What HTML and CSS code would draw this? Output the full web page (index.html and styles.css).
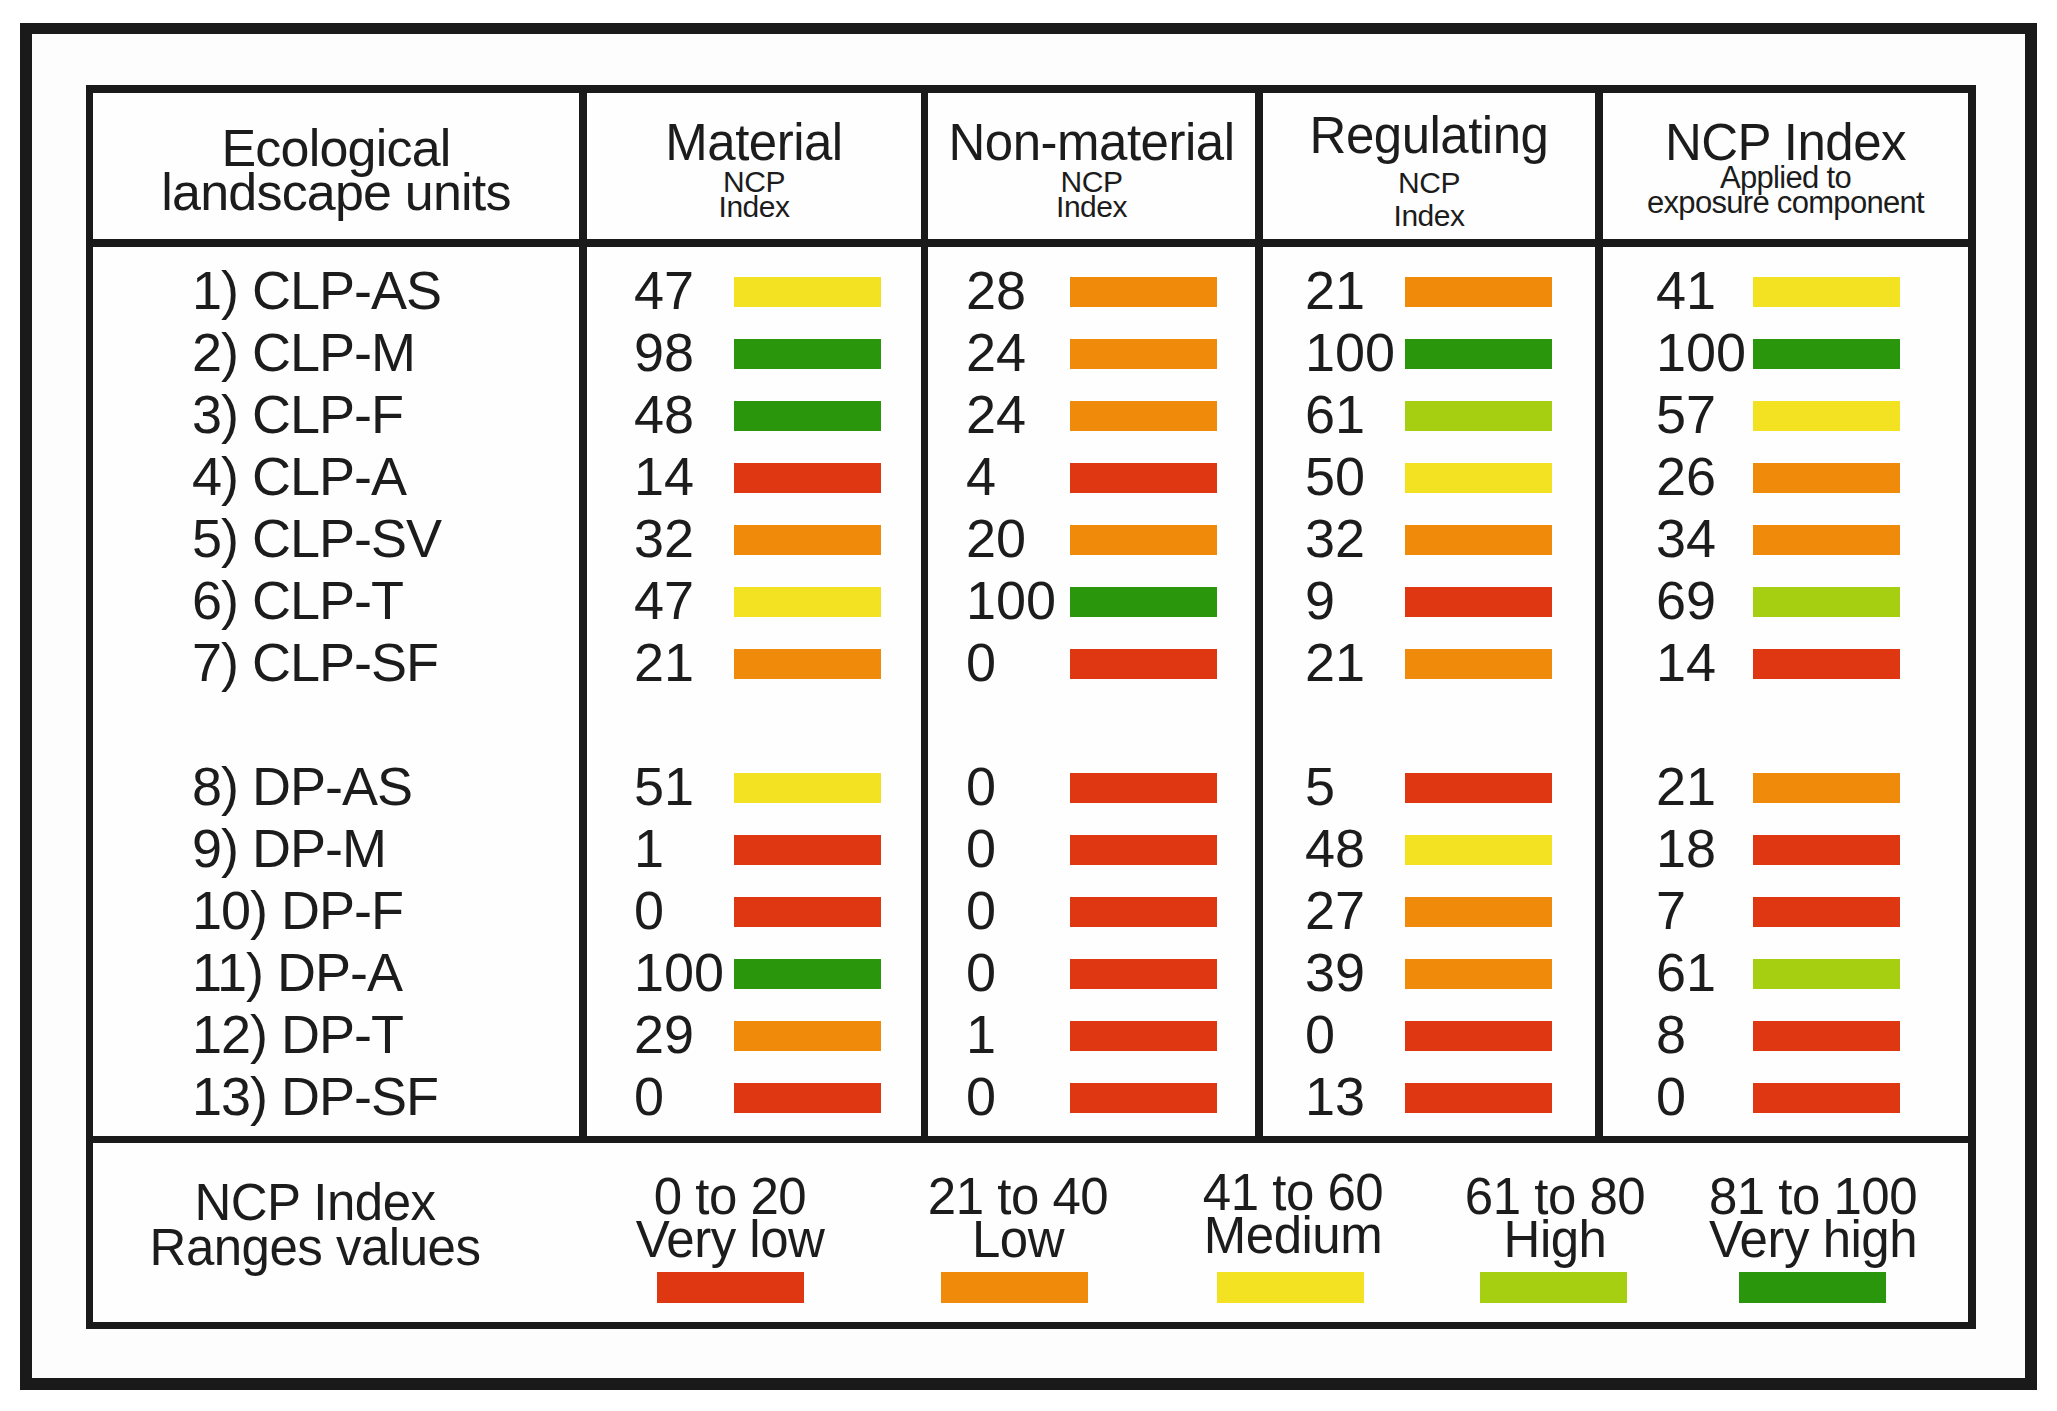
FILE: index.html
```html
<!DOCTYPE html>
<html lang="en">
<head>
<meta charset="utf-8">
<title>NCP Index table</title>
<link rel="stylesheet" href="styles.css">
</head>
<body>
<div class="frame">
  <div class="table">
    <div class="head">
      <div class="hc hc1">
        <div class="h-main">Ecological</div>
        <div class="h-main">landscape units</div>
      </div>
      <div class="hc hc2">
        <div class="h-main">Material</div>
        <div class="h-sub s1">NCP</div>
        <div class="h-sub">Index</div>
      </div>
      <div class="hc hc3">
        <div class="h-main">Non-material</div>
        <div class="h-sub s1">NCP</div>
        <div class="h-sub">Index</div>
      </div>
      <div class="hc hc4">
        <div class="h-main">Regulating</div>
        <div class="h-sub s1">NCP</div>
        <div class="h-sub s2">Index</div>
      </div>
      <div class="hc hc5">
        <div class="h-main">NCP Index</div>
        <div class="h-sub s1">Applied to</div>
        <div class="h-sub">exposure component</div>
      </div>
    </div>

    <div class="body">
      <div class="col labels">
        <div class="row">1) CLP-AS</div>
        <div class="row">2) CLP-M</div>
        <div class="row">3) CLP-F</div>
        <div class="row">4) CLP-A</div>
        <div class="row">5) CLP-SV</div>
        <div class="row">6) CLP-T</div>
        <div class="row">7) CLP-SF</div>
        <div class="gap"></div>
        <div class="row">8) DP-AS</div>
        <div class="row">9) DP-M</div>
        <div class="row">10) DP-F</div>
        <div class="row">11) DP-A</div>
        <div class="row">12) DP-T</div>
        <div class="row">13) DP-SF</div>
      </div>

      <div class="col c2">
        <div class="row"><span class="v">47</span><span class="bar yl"></span></div>
        <div class="row"><span class="v">98</span><span class="bar gr"></span></div>
        <div class="row"><span class="v">48</span><span class="bar gr"></span></div>
        <div class="row"><span class="v">14</span><span class="bar rd"></span></div>
        <div class="row"><span class="v">32</span><span class="bar or"></span></div>
        <div class="row"><span class="v">47</span><span class="bar yl"></span></div>
        <div class="row"><span class="v">21</span><span class="bar or"></span></div>
        <div class="gap"></div>
        <div class="row"><span class="v">51</span><span class="bar yl"></span></div>
        <div class="row"><span class="v">1</span><span class="bar rd"></span></div>
        <div class="row"><span class="v">0</span><span class="bar rd"></span></div>
        <div class="row"><span class="v">100</span><span class="bar gr"></span></div>
        <div class="row"><span class="v">29</span><span class="bar or"></span></div>
        <div class="row"><span class="v">0</span><span class="bar rd"></span></div>
      </div>

      <div class="col c3">
        <div class="row"><span class="v">28</span><span class="bar or"></span></div>
        <div class="row"><span class="v">24</span><span class="bar or"></span></div>
        <div class="row"><span class="v">24</span><span class="bar or"></span></div>
        <div class="row"><span class="v">4</span><span class="bar rd"></span></div>
        <div class="row"><span class="v">20</span><span class="bar or"></span></div>
        <div class="row"><span class="v">100</span><span class="bar gr"></span></div>
        <div class="row"><span class="v">0</span><span class="bar rd"></span></div>
        <div class="gap"></div>
        <div class="row"><span class="v">0</span><span class="bar rd"></span></div>
        <div class="row"><span class="v">0</span><span class="bar rd"></span></div>
        <div class="row"><span class="v">0</span><span class="bar rd"></span></div>
        <div class="row"><span class="v">0</span><span class="bar rd"></span></div>
        <div class="row"><span class="v">1</span><span class="bar rd"></span></div>
        <div class="row"><span class="v">0</span><span class="bar rd"></span></div>
      </div>

      <div class="col c4">
        <div class="row"><span class="v">21</span><span class="bar or"></span></div>
        <div class="row"><span class="v">100</span><span class="bar gr"></span></div>
        <div class="row"><span class="v">61</span><span class="bar lg"></span></div>
        <div class="row"><span class="v">50</span><span class="bar yl"></span></div>
        <div class="row"><span class="v">32</span><span class="bar or"></span></div>
        <div class="row"><span class="v">9</span><span class="bar rd"></span></div>
        <div class="row"><span class="v">21</span><span class="bar or"></span></div>
        <div class="gap"></div>
        <div class="row"><span class="v">5</span><span class="bar rd"></span></div>
        <div class="row"><span class="v">48</span><span class="bar yl"></span></div>
        <div class="row"><span class="v">27</span><span class="bar or"></span></div>
        <div class="row"><span class="v">39</span><span class="bar or"></span></div>
        <div class="row"><span class="v">0</span><span class="bar rd"></span></div>
        <div class="row"><span class="v">13</span><span class="bar rd"></span></div>
      </div>

      <div class="col c5">
        <div class="row"><span class="v">41</span><span class="bar yl"></span></div>
        <div class="row"><span class="v">100</span><span class="bar gr"></span></div>
        <div class="row"><span class="v">57</span><span class="bar yl"></span></div>
        <div class="row"><span class="v">26</span><span class="bar or"></span></div>
        <div class="row"><span class="v">34</span><span class="bar or"></span></div>
        <div class="row"><span class="v">69</span><span class="bar lg"></span></div>
        <div class="row"><span class="v">14</span><span class="bar rd"></span></div>
        <div class="gap"></div>
        <div class="row"><span class="v">21</span><span class="bar or"></span></div>
        <div class="row"><span class="v">18</span><span class="bar rd"></span></div>
        <div class="row"><span class="v">7</span><span class="bar rd"></span></div>
        <div class="row"><span class="v">61</span><span class="bar lg"></span></div>
        <div class="row"><span class="v">8</span><span class="bar rd"></span></div>
        <div class="row"><span class="v">0</span><span class="bar rd"></span></div>
      </div>
    </div>

    <div class="legend">
      <div class="lg-label">
        <div>NCP Index</div>
        <div>Ranges values</div>
      </div>
      <div class="lg-item">
        <div class="lg-line">0 to 20</div>
        <div class="lg-line">Very low</div>
        <span class="lg-bar rd"></span>
      </div>
      <div class="lg-item">
        <div class="lg-line">21 to 40</div>
        <div class="lg-line">Low</div>
        <span class="lg-bar or nudge8"></span>
      </div>
      <div class="lg-item lg-up">
        <div class="lg-line">41 to 60</div>
        <div class="lg-line">Medium</div>
        <span class="lg-bar yl nudge5"></span>
      </div>
      <div class="lg-item">
        <div class="lg-line">61 to 80</div>
        <div class="lg-line">High</div>
        <span class="lg-bar lg nudge4"></span>
      </div>
      <div class="lg-item">
        <div class="lg-line">81 to 100</div>
        <div class="lg-line">Very high</div>
        <span class="lg-bar gr nudge2"></span>
      </div>
    </div>
  </div>
</div>
</body>
</html>
```

FILE: styles.css
```css
* {
  box-sizing: border-box;
  margin: 0;
  padding: 0;
}

body {
  margin: 0;
  background: #ffffff;
  font-family: "Liberation Sans", Arial, sans-serif;
  color: #1c1c1c;
}

.frame {
  margin: 23px 0 0 20px;
  width: 2017px;
  height: 1367px;
  border: 12px solid #1a1a1a;
  border-top-width: 11px;
  padding: 51px 0 0 54px;
  background: #fdfdfd;
}

.table {
  width: 1890px;
  height: 1244px;
  border-style: solid;
  border-color: #1a1a1a;
  border-width: 8px 8px 7px 7px;
  display: flex;
  flex-direction: column;
  background: #fefefe;
}

/* ---------- header ---------- */
.head {
  height: 154px;
  flex: none;
  border-bottom: 8px solid #1a1a1a;
  display: grid;
  grid-template-columns: 486px 342px 334px 340px 373px;
}

.hc {
  display: flex;
  flex-direction: column;
  align-items: center;
  white-space: nowrap;
}

.hc2, .hc4, .hc5 { border-left: 8px solid #1a1a1a; }
.hc3 { border-left: 7px solid #1a1a1a; }

.h-main {
  font-size: 51px;
  line-height: 44px;
  letter-spacing: -0.5px;
}

.hc1 { padding-top: 33px; }
.hc1 .h-main { font-size: 52px; letter-spacing: -0.8px; }

.h-sub {
  font-size: 30px;
  line-height: 25px;
  letter-spacing: -0.5px;
}

.hc2, .hc3 { padding-top: 28px; }
.hc2 .s1, .hc3 .s1 { margin-top: 4px; }

.hc4 { padding-top: 21px; }
.hc4 .s1 { margin-top: 12px; }
.hc4 .s2 { margin-top: 8px; }

.hc5 { padding-top: 28px; }
.hc5 .h-sub { font-size: 31px; letter-spacing: -0.7px; }

/* ---------- body ---------- */
.body {
  height: 896px;
  flex: none;
  border-bottom: 7px solid #1a1a1a;
  display: grid;
  grid-template-columns: 486px 342px 334px 340px 373px;
}

.col {
  display: flex;
  flex-direction: column;
  padding-top: 12px;
}

.c2, .c4, .c5 { border-left: 8px solid #1a1a1a; }
.c3 { border-left: 7px solid #1a1a1a; }

.row {
  height: 62px;
  display: flex;
  align-items: center;
  font-size: 54px;
  line-height: 62px;
  white-space: nowrap;
}

.gap { height: 62px; }

.labels { padding-left: 99px; }
.labels .row { letter-spacing: -1px; }

.v { flex: none; }

.c2 { padding-left: 47px; }
.c2 .v { width: 100px; }

.c3 { padding-left: 38px; }
.c3 .v { width: 104px; }

.c4 { padding-left: 42px; }
.c4 .v { width: 100px; }

.c5 { padding-left: 53px; }
.c5 .v { width: 97px; }

.bar {
  flex: none;
  width: 147px;
  height: 30px;
  margin-top: 4px;
}

/* colours */
.rd { background: #e03713; }
.or { background: #ef8a0b; }
.yl { background: #f2e222; }
.lg { background: #a7cf12; }
.gr { background: #2a960c; }

/* ---------- legend ---------- */
.legend {
  flex: 1;
  display: grid;
  grid-template-columns: 497px 280px 296px 254px 270px 246px;
  align-items: start;
}

.lg-label {
  padding-top: 37px;
  padding-right: 53px;
  text-align: center;
  font-size: 51px;
  line-height: 45px;
  letter-spacing: -0.5px;
  white-space: nowrap;
}

.lg-item {
  display: flex;
  flex-direction: column;
  align-items: center;
  padding-top: 32px;
}

.lg-line {
  font-size: 51px;
  line-height: 43px;
  letter-spacing: -0.5px;
  white-space: nowrap;
}

.lg-up { padding-top: 28px; }
.lg-up .lg-bar { margin-top: 15px; }

.lg-bar {
  display: block;
  width: 147px;
  height: 31px;
  margin-top: 11px;
}

.nudge8 { margin-right: 8px; }
.nudge5 { margin-right: 5px; }
.nudge4 { margin-right: 4px; }
.nudge2 { margin-right: 2px; }
```
